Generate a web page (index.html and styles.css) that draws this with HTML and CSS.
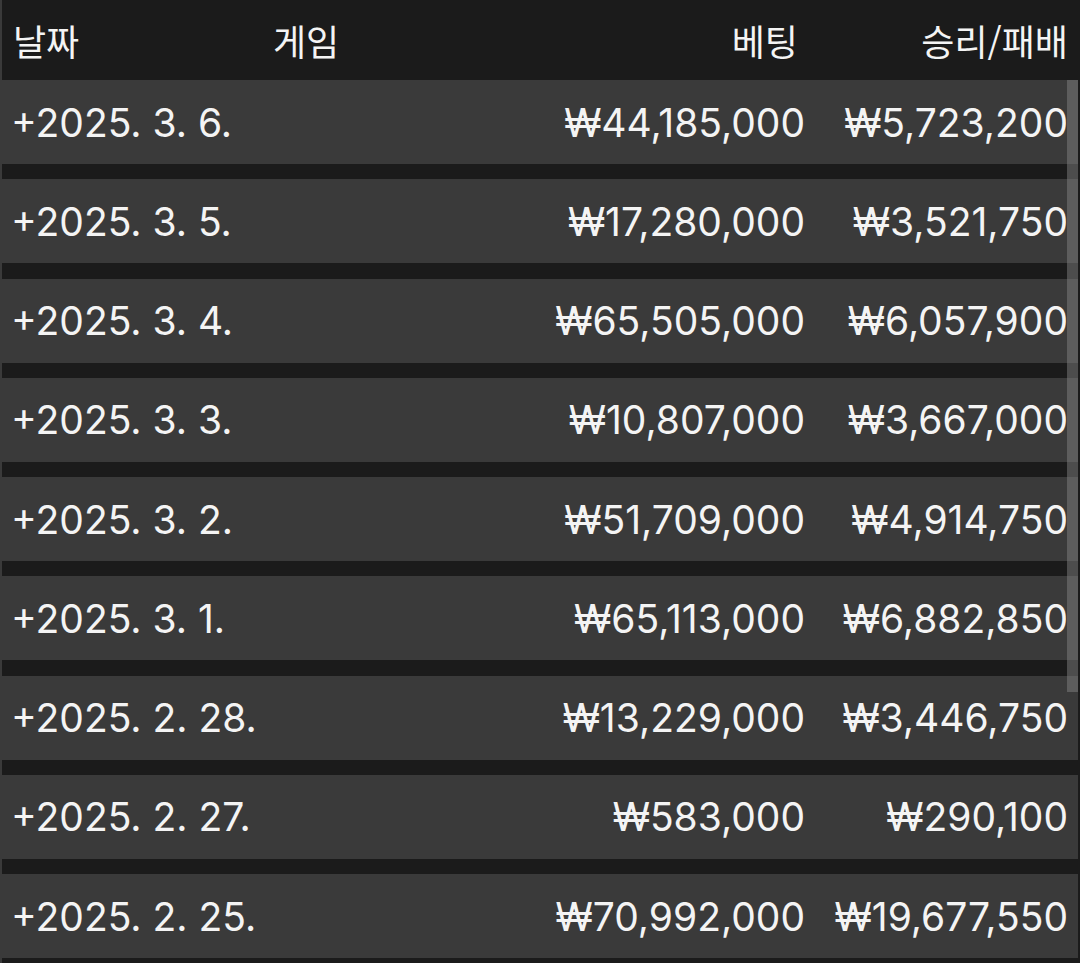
FILE: index.html
```html
<!DOCTYPE html>
<html lang="ko">
<head>
<meta charset="utf-8">
<link rel="stylesheet" href="styles.css">
</head>
<body>
<div class="table">
  <div class="head">
    <div class="c-date">날짜</div>
    <div class="c-game">게임</div>
    <div class="c-bet">베팅</div>
    <div class="c-win">승리/패배</div>
  </div>
  <div class="rows">
    <div class="row"><div class="c-date">+2025. 3. 6.</div><div class="c-game"></div><div class="c-bet">₩44,185,000</div><div class="c-win">₩5,723,200</div></div>
    <div class="row"><div class="c-date">+2025. 3. 5.</div><div class="c-game"></div><div class="c-bet">₩17,280,000</div><div class="c-win">₩3,521,750</div></div>
    <div class="row"><div class="c-date">+2025. 3. 4.</div><div class="c-game"></div><div class="c-bet">₩65,505,000</div><div class="c-win">₩6,057,900</div></div>
    <div class="row"><div class="c-date">+2025. 3. 3.</div><div class="c-game"></div><div class="c-bet">₩10,807,000</div><div class="c-win">₩3,667,000</div></div>
    <div class="row"><div class="c-date">+2025. 3. 2.</div><div class="c-game"></div><div class="c-bet">₩51,709,000</div><div class="c-win">₩4,914,750</div></div>
    <div class="row"><div class="c-date">+2025. 3. 1.</div><div class="c-game"></div><div class="c-bet">₩65,113,000</div><div class="c-win">₩6,882,850</div></div>
    <div class="row"><div class="c-date">+2025. 2. 28.</div><div class="c-game"></div><div class="c-bet">₩13,229,000</div><div class="c-win">₩3,446,750</div></div>
    <div class="row"><div class="c-date">+2025. 2. 27.</div><div class="c-game"></div><div class="c-bet">₩583,000</div><div class="c-win">₩290,100</div></div>
    <div class="row"><div class="c-date">+2025. 2. 25.</div><div class="c-game"></div><div class="c-bet">₩70,992,000</div><div class="c-win">₩19,677,550</div></div>
  </div>
  <div class="scroll-thumb"></div>
</div>
</body>
</html>
```

FILE: styles.css
```css
html, body {
  margin: 0;
  padding: 0;
  background: #1b1b1b;
}
body {
  width: 1080px;
  height: 963px;
  overflow: hidden;
  font-family: Inter, "Noto Sans CJK KR", sans-serif;
  color: #f4f4f4;
}
.table {
  position: relative;
  width: 1076px;
  border-left: 2px solid #3a3a3a;
  height: 963px;
}
.head, .row {
  display: grid;
  grid-template-columns: 271px 1fr 260px 273px;
  align-items: center;
  font-size: 39px;
  line-height: 1;
}
.head {
  height: 80px;
  background: #1b1b1b;
}
.head > div {
  font-family: "Noto Sans CJK KR", sans-serif;
  font-size: 36px;
}
.head .c-date { padding-left: 11px; }
.head .c-bet { padding-right: 7px; }
.rows {
  display: flex;
  flex-direction: column;
  gap: 15.25px;
}
.row {
  height: 84px;
  background: #3a3a3a;
}
.c-date { padding-left: 9px; }
.c-bet, .c-win { text-align: right; }
.c-win { padding-right: 10px; }
.scroll-thumb {
  position: absolute;
  left: 1065px;
  top: 80px;
  width: 11px;
  height: 612px;
  background: rgba(128, 128, 128, 0.5);
}
```
